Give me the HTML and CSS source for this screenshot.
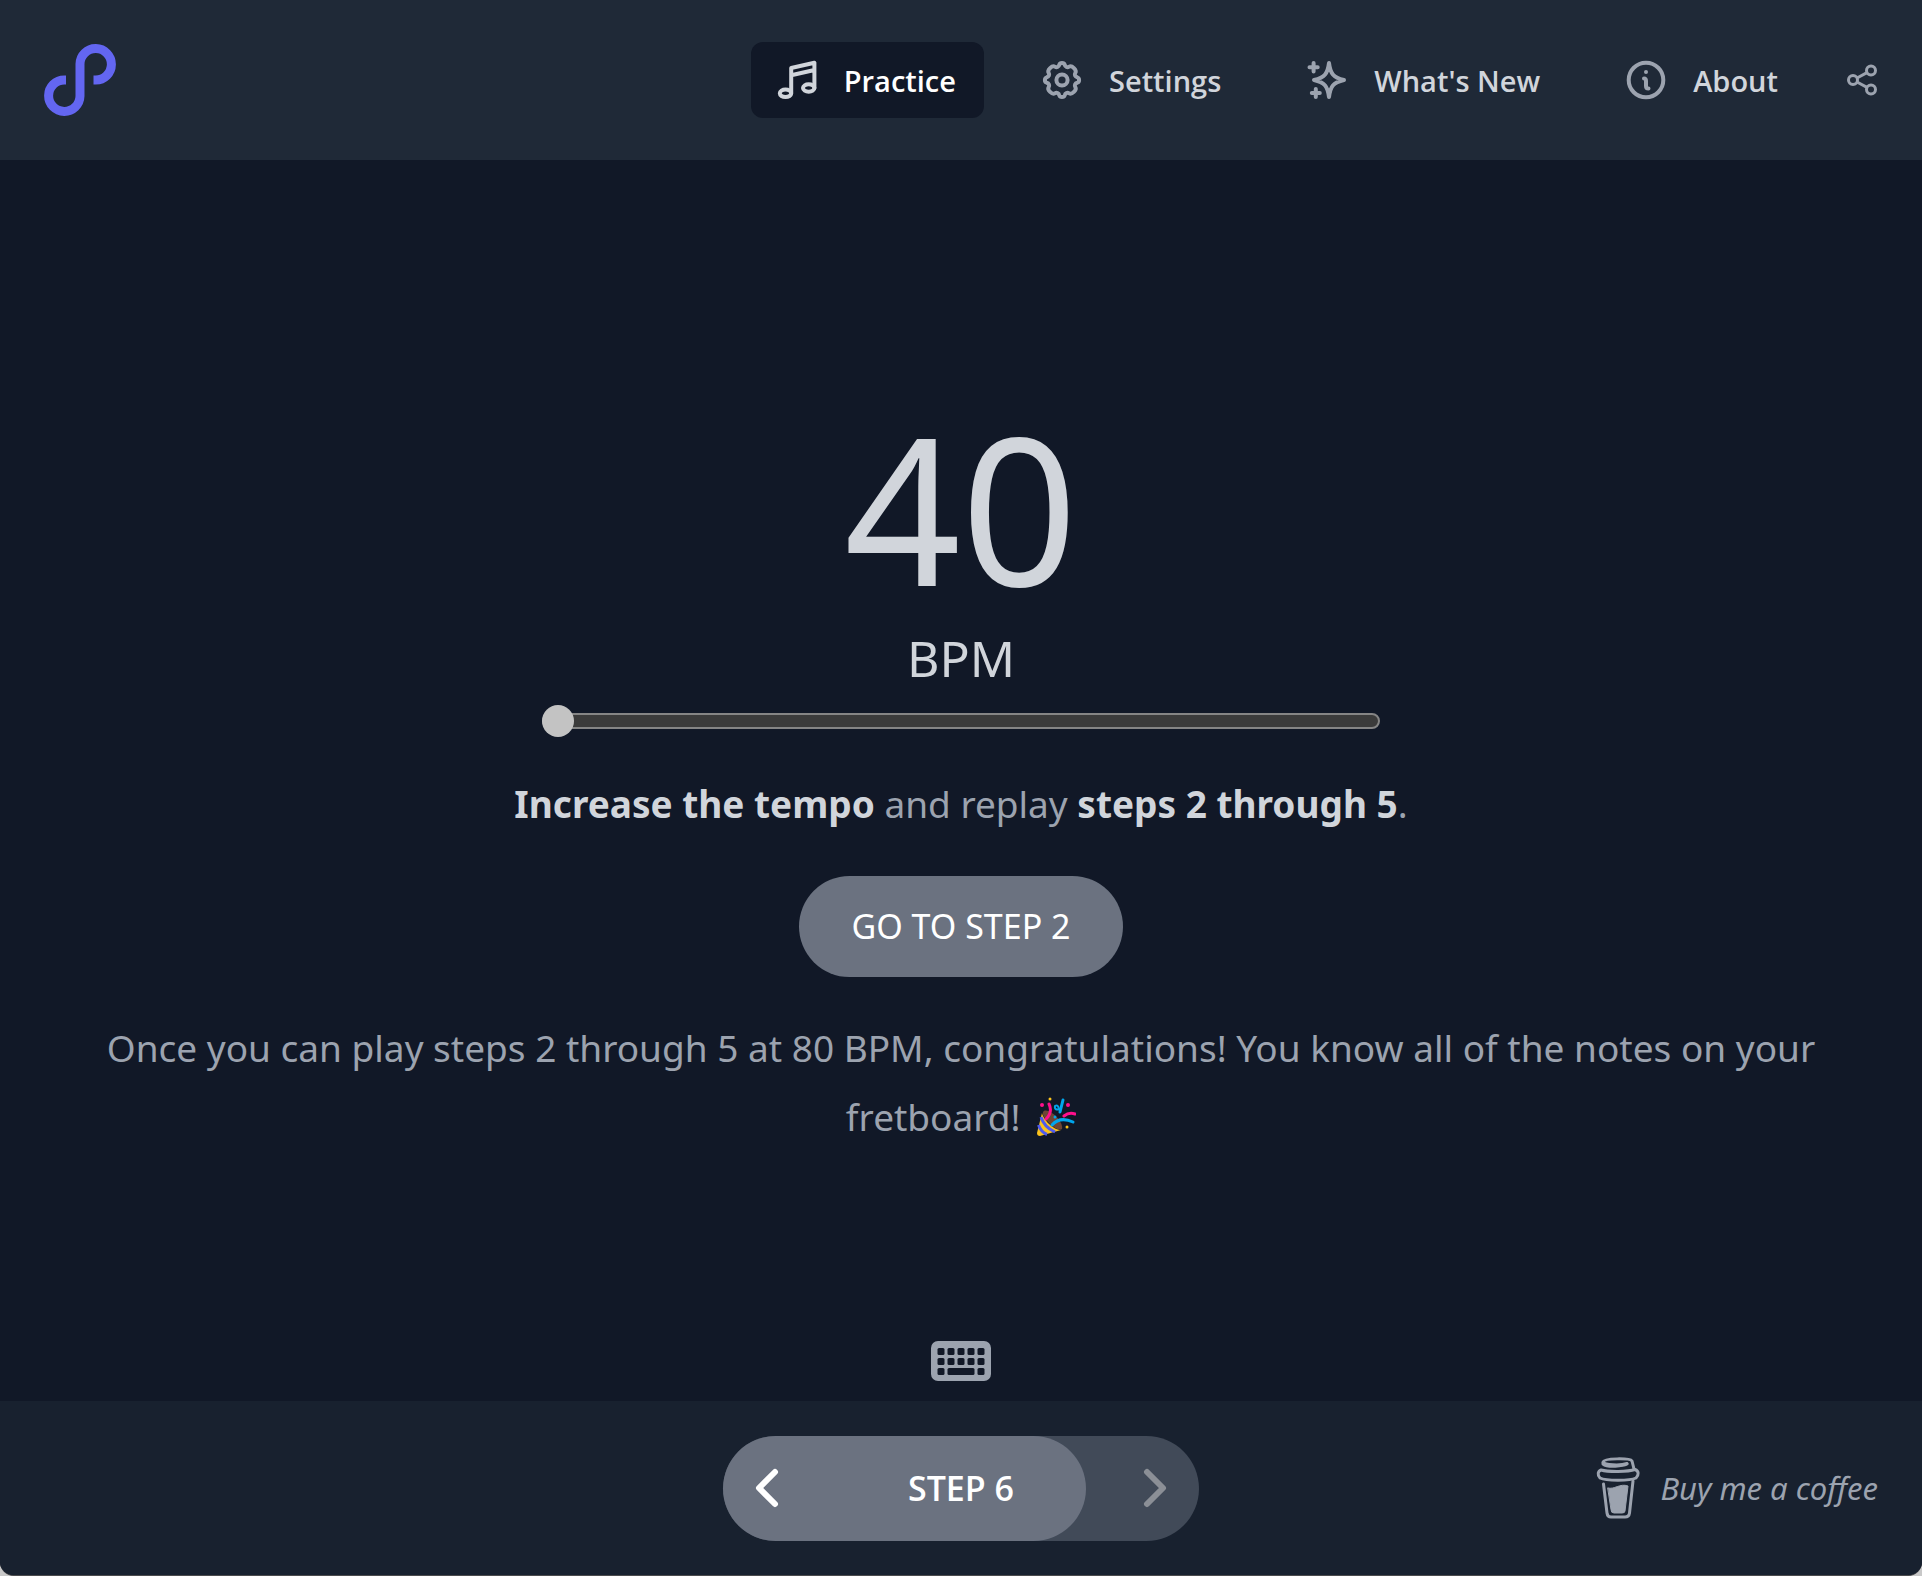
FILE: index.html
```html
<!DOCTYPE html>
<html lang="en">
<head>
    <meta charset="UTF-8">
    <meta name="viewport" content="width=device-width, initial-scale=1.0">
    <title>Fretboard Practice</title>
    <link rel="stylesheet" href="styles.css">
</head>
<body>
    <div class="app">
        <header class="header">
            <a class="logo" href="#" aria-label="Home">
                <svg width="72" height="72" viewBox="0 0 72 72" fill="none" stroke="currentColor" stroke-width="9">
                    <path d="M22 36H20.3A15.7 15.7 0 1 0 36 52V20A15.7 15.7 0 1 1 51.7 36H49.5"/>
                </svg>
            </a>

            <nav class="nav">
                <a class="nav-link active" href="#">
                    <svg class="icon" viewBox="0 0 40 40">
                        <ellipse cx="8.5" cy="33.3" rx="5.7" ry="3.8"/>
                        <ellipse cx="31.7" cy="28" rx="5.7" ry="3.8"/>
                        <path d="M14.2 33.3V8L37.4 2.8V28M14.2 15.2L37.4 10"/>
                    </svg>
                    Practice
                </a>
                <a class="nav-link" href="#">
                    <svg class="icon" viewBox="0 0 40 40">
                        <circle cx="20" cy="20" r="5.6"/>
                        <path d="M17.3 4.7C18 2.3 22 2.3 22.7 4.7C23.3 7 25.2 7.8 27.2 6.6C29.9 5 35 10.1 33.4 12.8C32.2 14.8 33 16.7 35.3 17.3C37.7 18 37.7 22 35.3 22.7C33 23.3 32.2 25.2 33.4 27.2C35 29.9 29.9 35 27.2 33.4C25.2 32.2 23.3 33 22.7 35.3C22 37.7 18 37.7 17.3 35.3C16.7 33 14.8 32.2 12.8 33.4C10.1 35 5 29.9 6.6 27.2C7.8 25.2 7 23.3 4.7 22.7C2.3 22 2.3 18 4.7 17.3C7 16.7 7.8 14.8 6.6 12.8C5 10.1 10.1 5 12.8 6.6C14.8 7.8 16.7 7 17.3 4.7Z"/>
                    </svg>
                    Settings
                </a>
                <a class="nav-link" href="#">
                    <svg class="icon" viewBox="0 0 40 40">
                        <path d="M22 3C23.4 13.5 26 17.5 37 20C26 22.5 23.4 26.5 22 37C20.6 26.5 18 22.5 7 20C18 17.5 20.6 13.5 22 3ZM6.6 3V11.6M2.5 7.3H10.7M8.8 29V37M4.8 33H12.8"/>
                    </svg>
                    What's New
                </a>
                <a class="nav-link" href="#">
                    <svg class="icon" viewBox="0 0 40 40">
                        <circle cx="20" cy="20" r="17.3"/>
                        <path d="M18 18.5C20 18.5 20 19.5 20 21V26C20 27.5 20.5 28.5 22.5 28.5"/>
                        <circle class="dot" cx="20" cy="12" r="2"/>
                    </svg>
                    About
                </a>
                <button class="share" type="button" aria-label="Share">
                    <svg width="32" height="32" viewBox="0 0 32 32" fill="none" stroke="currentColor" stroke-width="3">
                        <circle cx="7" cy="16" r="4.5"/>
                        <circle cx="25" cy="6.5" r="4.5"/>
                        <circle cx="25" cy="25.5" r="4.5"/>
                        <path d="M11 14L21 8.7M11 18L21 23.3"/>
                    </svg>
                </button>
            </nav>
        </header>

        <main class="main">
            <div class="content">
                <label class="tempo" for="tempo">
                    <span class="tempo-value" id="tempo-value">40</span>
                    <span class="tempo-unit">BPM</span>
                </label>
                <input class="slider" type="range" id="tempo" min="40" max="200" value="40">

                <p class="text"><strong>Increase the tempo</strong> and replay <strong>steps 2 through 5</strong>.</p>
                <button class="go-button" type="button">GO TO STEP 2</button>
                <p class="text">
                    Once you can play steps 2 through 5 at 80 BPM, congratulations! You know all of the notes on your fretboard!
                    <svg class="party" viewBox="0 0 40 40" role="img" aria-label="Party popper" fill="none" stroke-linecap="round">
                        <path fill="#6d4534" d="M7 15C11 9 28 24 26 32C22 36 5 21 7 15Z"/>
                        <path fill="#fcc21b" d="M6 16C7 22 17 33 25 33L4 39Q1 39 1 36Z"/>
                        <path stroke="#4f5bed" stroke-width="3" stroke-linecap="butt" d="M5 20Q8 30 19 35M2.5 28Q5 35 11 37.5"/>
                        <path stroke="#ff0f8c" stroke-width="3" d="M13 7Q17 15 10 22M28 19Q33 15 39 17"/>
                        <path stroke="#00a6ed" stroke-width="3" d="M16 28Q24 19 37 25M27 3L24 15"/>
                        <path stroke="#00a6ed" stroke-width="2" d="M25 12Q18 14 19 9Q22 7 23 12"/>
                        <g fill="#ff0f8c"><circle cx="6" cy="8" r="2"/><circle cx="32" cy="8" r="2"/></g>
                        <g fill="#fcc21b"><circle cx="14" cy="2" r="1.5"/><circle cx="31" cy="30" r="1.5"/></g>
                        <circle fill="#00a6ed" cx="19" cy="20" r="1.5"/>
                    </svg>
                </p>
            </div>
            <button class="keyboard" type="button" aria-label="Keyboard shortcuts">
                <svg width="60" height="40" viewBox="0 0 60 40">
                    <rect width="60" height="40" rx="7" fill="currentColor"/>
                    <g fill="#111827">
                        <rect x="6.5" y="7" width="7" height="7" rx="1.5"/><rect x="16.5" y="7" width="7" height="7" rx="1.5"/><rect x="26.5" y="7" width="7" height="7" rx="1.5"/><rect x="36.5" y="7" width="7" height="7" rx="1.5"/><rect x="46.5" y="7" width="7" height="7" rx="1.5"/>
                        <rect x="6.5" y="17" width="7" height="7" rx="1.5"/><rect x="16.5" y="17" width="7" height="7" rx="1.5"/><rect x="26.5" y="17" width="7" height="7" rx="1.5"/><rect x="36.5" y="17" width="7" height="7" rx="1.5"/><rect x="46.5" y="17" width="7" height="7" rx="1.5"/>
                        <rect x="6.5" y="27" width="7" height="7" rx="1.5"/><rect x="16.5" y="27" width="27" height="7" rx="1.5"/><rect x="46.5" y="27" width="7" height="7" rx="1.5"/>
                    </g>
                </svg>
            </button>
        </main>

        <footer class="footer">
            <div class="pager">
                <div class="pager-progress"></div>
                <button class="pager-button" type="button" aria-label="Previous step">
                    <svg width="24" height="40" viewBox="0 0 24 40"><path d="M20 4L4 20L20 36"/></svg>
                </button>
                <span class="pager-label">STEP 6</span>
                <button class="pager-button" type="button" aria-label="Next step" disabled>
                    <svg width="24" height="40" viewBox="0 0 24 40"><path d="M4 4L20 20L4 36"/></svg>
                </button>
            </div>
            <a class="coffee" href="#">
                <svg width="44" height="62" viewBox="0 0 44 62" fill="none" stroke="currentColor" stroke-width="3" stroke-linecap="round" stroke-linejoin="round">
                    <path d="M31 6.5C24 9 8 8 7 5C8 1 34 1 36 4L38 12"/>
                    <path d="M7 6V7C12 11 27 9 31 7"/>
                    <path d="M5 13C12 15 32 15 39 12.5C43 14 43 18 40 21C34 24 10 24 4 21C1 18 2 14 5 13Z"/>
                    <path d="M7.5 27L11 56Q11.5 60 15 60H29Q33 60 33.5 56L37 24"/>
                    <path fill="currentColor" stroke-width="1" d="M12 31C18 33 24 26 32 29L29 54Q29 56 26 56H18Q15 56 15 53Z"/>
                </svg>
                Buy me a coffee
            </a>
        </footer>
    </div>

    <script>
        const slider = document.getElementById("tempo");

        slider.addEventListener("input", () => {
            document.getElementById("tempo-value").textContent = slider.value;
        });
    </script>
</body>
</html>
```
FILE: styles.css
```css
* {
    box-sizing: border-box;
}
html {
    background-color: #c8c8c8;
}
body {
    margin: 0;
    font-family: "Noto Sans", "Open Sans", sans-serif;
    color: #d1d5db;
}
button {
    padding: 0;
    border: none;
    background: none;
    color: inherit;
    font-family: inherit;
    cursor: pointer;
}
a {
    color: inherit;
    text-decoration: none;
}
svg {
    display: block;
}
.app {
    display: flex;
    flex-direction: column;
    min-height: 100vh;
    background-color: #111827;
    border-bottom: 1px solid #4b4b4d;
    border-radius: 0 0 14px 14px;
    overflow: hidden;
}

/* Header */
.header {
    display: flex;
    align-items: center;
    justify-content: space-between;
    height: 160px;
    padding: 0 44px;
    background-color: #1f2937;
}
.logo {
    color: #6366f1;
}
.nav {
    display: flex;
    align-items: center;
    gap: 32px;
}
.nav-link {
    display: flex;
    align-items: center;
    gap: 27px;
    height: 76px;
    padding: 0 28px 0 26px;
    border-radius: 12px;
    font-family: "Open Sans", sans-serif;
    font-size: 29px;
    font-weight: 600;
}
.nav-link.active {
    background-color: #111827;
    color: #fff;
}
.icon {
    width: 40px;
    height: 40px;
    fill: none;
    stroke: #9ca3af;
    stroke-width: 4;
    stroke-linecap: round;
    stroke-linejoin: round;
}
.active .icon {
    stroke: #d1d5db;
}
.icon .dot {
    fill: #9ca3af;
    stroke: none;
}
.share {
    margin-left: 8px;
    color: #9ca3af;
}

/* Practice */
.main {
    display: flex;
    flex: 1;
    flex-direction: column;
    align-items: center;
    padding: 0 88px 20px;
}
.content {
    display: flex;
    flex: 1;
    flex-direction: column;
    align-items: center;
    justify-content: center;
    width: 100%;
    padding-top: 40px;
}
.tempo {
    display: flex;
    flex-direction: column;
    align-items: center;
}
.tempo-value {
    font-size: 204px;
    line-height: 232px;
}
.tempo-unit {
    font-size: 50px;
    line-height: 70px;
}
.slider {
    appearance: none;
    width: 48%;
    height: 16px;
    margin: 20px 0 40px;
    border: 2px solid #858585;
    border-radius: 8px;
    background-color: #3b3b3b;
}
.slider::-webkit-slider-thumb {
    appearance: none;
    width: 32px;
    height: 32px;
    margin-left: -2px;
    border-radius: 50%;
    background-color: #c3c3c3;
}
.text {
    margin: 0;
    color: #9ca3af;
    font-size: 37px;
    line-height: 69px;
    text-align: center;
}
.text strong {
    color: #d1d5db;
}
.go-button {
    height: 101px;
    margin: 38px 0 36px;
    padding: 0 52px;
    border-radius: 51px;
    background-color: #6b7280;
    color: #fff;
    font-size: 34px;
}
.party {
    display: inline-block;
    width: 40px;
    height: 40px;
    margin-left: 6px;
    vertical-align: -6px;
}
.keyboard {
    color: #9ca3af;
}

/* Footer */
.footer {
    display: grid;
    grid-template-columns: 1fr 476px 1fr;
    align-items: center;
    height: 174px;
    padding: 0 44px;
    background-color: #18212f;
}
.pager {
    position: relative;
    display: flex;
    grid-column: 2;
    align-items: center;
    justify-content: space-between;
    height: 105px;
    border-radius: 53px;
    background-color: #414a58;
    color: #fff;
}
.pager-progress {
    position: absolute;
    top: 0;
    bottom: 0;
    left: 0;
    width: 363px;
    border-radius: 53px;
    background-color: #6b7280;
}
.pager-button {
    position: relative;
    padding: 32px;
}
.pager-button:disabled {
    color: #8b8f96;
}
.pager-button path {
    fill: none;
    stroke: currentColor;
    stroke-width: 6;
    stroke-linecap: round;
    stroke-linejoin: round;
}
.pager-label {
    position: relative;
    font-family: "Open Sans", sans-serif;
    font-size: 34px;
    font-weight: 600;
}
.coffee {
    display: flex;
    align-items: center;
    justify-self: end;
    gap: 20px;
    color: #9ca3af;
    font-size: 31px;
    font-style: italic;
}
```
